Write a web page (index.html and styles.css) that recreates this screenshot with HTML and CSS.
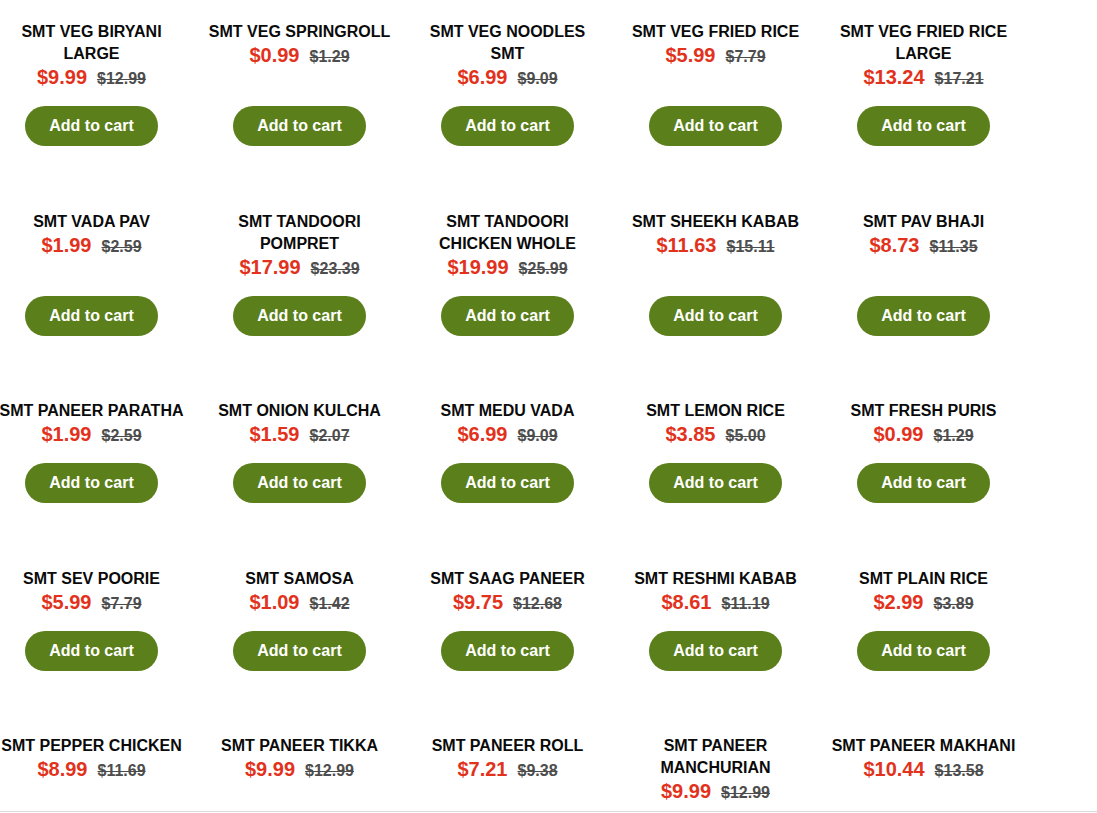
FILE: index.html
```html
<!DOCTYPE html>
<html lang="en">
<head>
  <meta charset="UTF-8">
  <meta name="viewport" content="width=device-width, initial-scale=1.0">
  <title>SMT Menu</title>
  <link rel="stylesheet" href="styles.css">
</head>
<body>
  <ul class="products">
    <li class="product">
      <h2 class="product-title">SMT VEG BIRYANI LARGE</h2>
      <div class="price"><ins>$9.99</ins><del>$12.99</del></div>
      <div class="actions"><button class="add-to-cart">Add to cart</button></div>
    </li>
    <li class="product">
      <h2 class="product-title">SMT VEG SPRINGROLL</h2>
      <div class="price"><ins>$0.99</ins><del>$1.29</del></div>
      <div class="actions"><button class="add-to-cart">Add to cart</button></div>
    </li>
    <li class="product">
      <h2 class="product-title">SMT VEG NOODLES SMT</h2>
      <div class="price"><ins>$6.99</ins><del>$9.09</del></div>
      <div class="actions"><button class="add-to-cart">Add to cart</button></div>
    </li>
    <li class="product">
      <h2 class="product-title">SMT VEG FRIED RICE</h2>
      <div class="price"><ins>$5.99</ins><del>$7.79</del></div>
      <div class="actions"><button class="add-to-cart">Add to cart</button></div>
    </li>
    <li class="product">
      <h2 class="product-title">SMT VEG FRIED RICE LARGE</h2>
      <div class="price"><ins>$13.24</ins><del>$17.21</del></div>
      <div class="actions"><button class="add-to-cart">Add to cart</button></div>
    </li>

    <li class="product">
      <h2 class="product-title">SMT VADA PAV</h2>
      <div class="price"><ins>$1.99</ins><del>$2.59</del></div>
      <div class="actions"><button class="add-to-cart">Add to cart</button></div>
    </li>
    <li class="product">
      <h2 class="product-title">SMT TANDOORI POMPRET</h2>
      <div class="price"><ins>$17.99</ins><del>$23.39</del></div>
      <div class="actions"><button class="add-to-cart">Add to cart</button></div>
    </li>
    <li class="product">
      <h2 class="product-title">SMT TANDOORI CHICKEN WHOLE</h2>
      <div class="price"><ins>$19.99</ins><del>$25.99</del></div>
      <div class="actions"><button class="add-to-cart">Add to cart</button></div>
    </li>
    <li class="product">
      <h2 class="product-title">SMT SHEEKH KABAB</h2>
      <div class="price"><ins>$11.63</ins><del>$15.11</del></div>
      <div class="actions"><button class="add-to-cart">Add to cart</button></div>
    </li>
    <li class="product">
      <h2 class="product-title">SMT PAV BHAJI</h2>
      <div class="price"><ins>$8.73</ins><del>$11.35</del></div>
      <div class="actions"><button class="add-to-cart">Add to cart</button></div>
    </li>

    <li class="product">
      <h2 class="product-title">SMT PANEER PARATHA</h2>
      <div class="price"><ins>$1.99</ins><del>$2.59</del></div>
      <div class="actions"><button class="add-to-cart">Add to cart</button></div>
    </li>
    <li class="product">
      <h2 class="product-title">SMT ONION KULCHA</h2>
      <div class="price"><ins>$1.59</ins><del>$2.07</del></div>
      <div class="actions"><button class="add-to-cart">Add to cart</button></div>
    </li>
    <li class="product">
      <h2 class="product-title">SMT MEDU VADA</h2>
      <div class="price"><ins>$6.99</ins><del>$9.09</del></div>
      <div class="actions"><button class="add-to-cart">Add to cart</button></div>
    </li>
    <li class="product">
      <h2 class="product-title">SMT LEMON RICE</h2>
      <div class="price"><ins>$3.85</ins><del>$5.00</del></div>
      <div class="actions"><button class="add-to-cart">Add to cart</button></div>
    </li>
    <li class="product">
      <h2 class="product-title">SMT FRESH PURIS</h2>
      <div class="price"><ins>$0.99</ins><del>$1.29</del></div>
      <div class="actions"><button class="add-to-cart">Add to cart</button></div>
    </li>

    <li class="product">
      <h2 class="product-title">SMT SEV POORIE</h2>
      <div class="price"><ins>$5.99</ins><del>$7.79</del></div>
      <div class="actions"><button class="add-to-cart">Add to cart</button></div>
    </li>
    <li class="product">
      <h2 class="product-title">SMT SAMOSA</h2>
      <div class="price"><ins>$1.09</ins><del>$1.42</del></div>
      <div class="actions"><button class="add-to-cart">Add to cart</button></div>
    </li>
    <li class="product">
      <h2 class="product-title">SMT SAAG PANEER</h2>
      <div class="price"><ins>$9.75</ins><del>$12.68</del></div>
      <div class="actions"><button class="add-to-cart">Add to cart</button></div>
    </li>
    <li class="product">
      <h2 class="product-title">SMT RESHMI KABAB</h2>
      <div class="price"><ins>$8.61</ins><del>$11.19</del></div>
      <div class="actions"><button class="add-to-cart">Add to cart</button></div>
    </li>
    <li class="product">
      <h2 class="product-title">SMT PLAIN RICE</h2>
      <div class="price"><ins>$2.99</ins><del>$3.89</del></div>
      <div class="actions"><button class="add-to-cart">Add to cart</button></div>
    </li>

    <li class="product">
      <h2 class="product-title">SMT PEPPER CHICKEN</h2>
      <div class="price"><ins>$8.99</ins><del>$11.69</del></div>
      <div class="actions"><button class="add-to-cart">Add to cart</button></div>
    </li>
    <li class="product">
      <h2 class="product-title">SMT PANEER TIKKA</h2>
      <div class="price"><ins>$9.99</ins><del>$12.99</del></div>
      <div class="actions"><button class="add-to-cart">Add to cart</button></div>
    </li>
    <li class="product">
      <h2 class="product-title">SMT PANEER ROLL</h2>
      <div class="price"><ins>$7.21</ins><del>$9.38</del></div>
      <div class="actions"><button class="add-to-cart">Add to cart</button></div>
    </li>
    <li class="product">
      <h2 class="product-title">SMT PANEER MANCHURIAN</h2>
      <div class="price"><ins>$9.99</ins><del>$12.99</del></div>
      <div class="actions"><button class="add-to-cart">Add to cart</button></div>
    </li>
    <li class="product">
      <h2 class="product-title">SMT PANEER MAKHANI</h2>
      <div class="price"><ins>$10.44</ins><del>$13.58</del></div>
      <div class="actions"><button class="add-to-cart">Add to cart</button></div>
    </li>
  </ul>

  <div class="bottom-bar"></div>
</body>
</html>
```

FILE: styles.css
```css
body {
  font-family: "Liberation Sans", Arial, sans-serif;
  background-color: #fff;
  color: #111;
  margin: 0;
}
.products {
  list-style: none;
  margin: 0 0 0 -4px;
  padding: 21px 0 0;
  display: grid;
  grid-template-columns: repeat(5, 191px);
  column-gap: 17px;
  row-gap: 64.5px;
}
.product {
  display: flex;
  flex-direction: column;
  align-items: center;
  text-align: center;
}
.product-title {
  margin: 0;
  font-size: 16px;
  line-height: 22px;
  font-weight: bold;
  color: #0a0a0a;
}
.price {
  display: flex;
  justify-content: center;
  align-items: baseline;
  gap: 10px;
  height: 24px;
  line-height: 25px;
  font-weight: bold;
}
.price ins {
  text-decoration: none;
  font-size: 20px;
  color: #e2321c;
}
.price del {
  font-size: 16px;
  color: #4d4d4d;
}
.actions {
  margin-top: auto;
  padding-top: 17px;
}
.add-to-cart {
  height: 40px;
  padding: 0 24px;
  font-family: inherit;
  font-size: 16px;
  font-weight: bold;
  border: none;
  border-radius: 20px;
  cursor: pointer;
  background-color: #5b7f1a;
  color: #fff;
}
.add-to-cart:hover {
  background-color: #4a6a12;
}
.bottom-bar {
  position: fixed;
  left: 0;
  right: 0;
  bottom: 0;
  height: 1px;
  border-top: 1px solid #dcdcdc;
  background-color: #fff;
}
```
